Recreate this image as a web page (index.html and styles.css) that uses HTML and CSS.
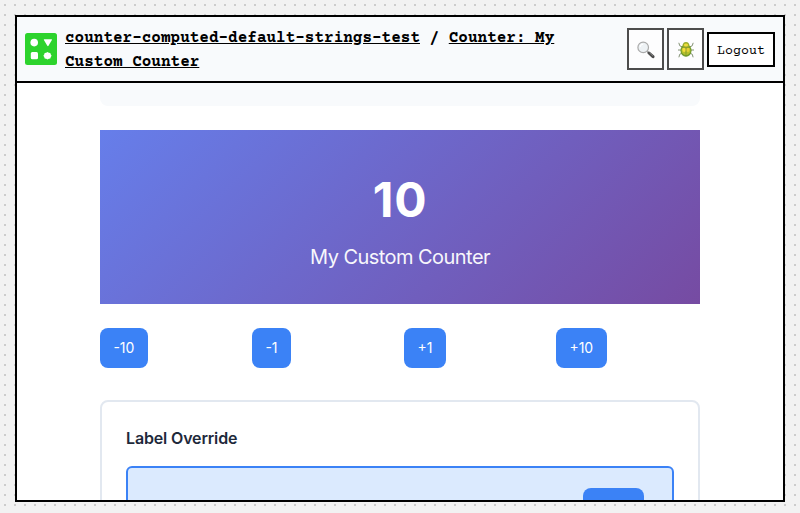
FILE: index.html
```html
<!DOCTYPE html>
<html lang="en">
<head>
<meta charset="utf-8">
<title>Counter: My Custom Counter</title>
<link rel="stylesheet" href="styles.css">
</head>
<body>
<div class="window">
  <header class="toolbar">
    <svg class="logo" viewBox="0 0 32 32" aria-hidden="true">
      <rect width="32" height="32" rx="2.5" fill="#2dd32d"/>
      <g fill="#fff">
        <circle cx="9.2" cy="9.6" r="3.8"/>
        <path d="M19.3 6.2h7.2q.8 0 .4.8l-3.4 5.7q-.6.9-1.2 0l-3.4-5.7q-.4-.8.4-.8z"/>
        <rect x="5.8" y="19" width="7.2" height="7.2" rx="1.5"/>
        <path d="M22.5 19l1.3.8 1.5.1.5 1.5.8 1.3-.8 1.3-.5 1.5-1.5.2-1.3.7-1.3-.7-1.5-.2-.5-1.5-.8-1.3.8-1.3.5-1.5 1.5-.1z"/>
      </g>
    </svg>
    <nav class="crumbs"><a href="#">counter-computed-default-strings-test</a> / <a href="#">Counter: My Custom Counter</a></nav>
    <div class="actions">
      <button class="icon-button" aria-label="Search">
        <svg width="18" height="18" viewBox="0 0 18 18">
          <path d="M10.2 10.2l2 2" stroke="#999" stroke-width="1.4"/>
          <path d="M12 12l4 3.7" stroke="#4c4c4c" stroke-width="3" stroke-linecap="round"/>
          <path d="M12.5 11.7l3.5 3.3" stroke="#858585" stroke-width=".8"/>
          <circle cx="6.2" cy="6.4" r="5.3" fill="#eef2f5" stroke="#aaa" stroke-width="1.2"/>
          <path d="M3.2 6a3.2 3.2 0 0 1 3-2.7" fill="none" stroke="#fff" stroke-width="1.1"/>
        </svg>
      </button>
      <button class="icon-button" aria-label="Debug">
        <svg width="18" height="18" viewBox="0 0 18 18">
          <path d="M6 6.3L2.8 4.8 1.8 1.8M12 6.3l3.2-1.5 1-3M5 9H1M13 9h4M5.3 12l-2.6 1.3-.8 3M12.7 12l2.6 1.3.8 3" fill="none" stroke="#849276"/>
          <ellipse cx="9" cy="9.6" rx="5.6" ry="6.1" fill="#719b2c"/>
          <ellipse cx="9" cy="9.4" rx="4.4" ry="4.9" fill="#b5c02b"/>
          <path d="M5.3 5.4Q5.8 1 9 1t3.7 4.4Q9 7 5.3 5.4z" fill="#99ae2c"/>
          <ellipse cx="9" cy="4" rx="2.1" ry="1.6" fill="#efdc3d"/>
          <ellipse cx="7.2" cy="8.7" rx="1.8" ry="2.3" fill="#f5dd3c"/>
          <ellipse cx="10.8" cy="8.7" rx="1.8" ry="2.3" fill="#e6d034"/>
          <path d="M4.7 6.1Q9 7.5 13.3 6.1M9 6.8v8.5" fill="none" stroke="#66842b" stroke-width=".6"/>
        </svg>
      </button>
      <button class="logout">Logout</button>
    </div>
  </header>
  <main class="content">
    <div class="previous-card"></div>
    <section class="hero">
      <div class="count">10</div>
      <div class="label">My Custom Counter</div>
    </section>
    <div class="steps">
      <div><button class="step">-10</button></div>
      <div><button class="step">-1</button></div>
      <div><button class="step">+1</button></div>
      <div><button class="step">+10</button></div>
    </div>
    <section class="panel">
      <h3>Label Override</h3>
      <div class="field"><div class="field-button"></div></div>
    </section>
  </main>
</div>
</body>
</html>
```
FILE: styles.css
```css
* { box-sizing: border-box; }
body {
  margin: 0;
  height: 513px;
  padding: 15px 15px 11px;
  overflow: hidden;
  background: #f2f2f2 url("data:image/svg+xml,%3Csvg xmlns='http://www.w3.org/2000/svg' width='10' height='10'%3E%3Crect x='4' y='4' width='2' height='2' fill='%23ccc'/%3E%3C/svg%3E");
  font-family: Inter, sans-serif;
}
.window {
  height: 487px;
  border: 2px solid #000;
  background: #fff;
  overflow: hidden;
}
.toolbar {
  display: flex;
  align-items: center;
  height: 66px;
  padding: 0 8px;
  border-bottom: 2px solid #000;
  background: #f8fafc;
}
.logo { flex: none; width: 32px; height: 32px; margin-right: 8px; }
.crumbs {
  flex: 1;
  padding: 2px 56px 0 0;
  font: bold 16px/24px "Courier Prime", "Courier New", "Liberation Mono", monospace;
  color: #000;
}
.crumbs a { color: inherit; text-decoration: underline; }
.actions { display: flex; align-items: center; gap: 3px; flex: none; }
button { margin: 0; }
.icon-button {
  display: flex;
  align-items: center;
  justify-content: center;
  width: 37px;
  height: 42px;
  padding: 1px 0 0;
  border: 2px solid #4c4c4c;
  background: #fdfdfe;
}
.logout {
  width: 68px;
  height: 35px;
  padding: 5px 0 0;
  border: 2px solid #000;
  background: #fff;
  color: #000;
  font: 13.333px "Courier Prime", "Courier New", "Liberation Mono", monospace;
}
.content { width: 600px; margin: 0 auto; }
.previous-card {
  height: 23px;
  margin-bottom: 24px;
  border-radius: 0 0 8px 8px;
  background: #f8fafc;
}
.hero {
  height: 174px;
  padding-top: 41px;
  background: linear-gradient(135deg, #667eea 0%, #764ba2 100%);
  color: #fff;
  text-align: center;
}
.count { font-size: 48px; font-weight: 700; line-height: 58px; letter-spacing: .8px; }
.label { margin-top: 16px; font-size: 20px; line-height: 24px; letter-spacing: -.55px; opacity: .95; }
.steps {
  display: grid;
  grid-template-columns: repeat(4, 1fr);
  gap: 8px;
  margin: 24px 0 32px;
}
.step {
  display: block;
  height: 40px;
  padding: 0 13.4px;
  border: 0;
  border-radius: 8px;
  background: #3b82f6;
  color: #fff;
  font: 14px/40px Inter, sans-serif;
}
.panel {
  height: 200px;
  padding: 24px;
  border: 2px solid #e2e8f0;
  border-radius: 8px;
}
h3 {
  margin: 0 0 16px;
  color: #1e293b;
  font-size: 16px;
  line-height: 24px;
  font-weight: 600;
  letter-spacing: -.15px;
}
.field {
  display: flex;
  justify-content: flex-end;
  height: 100px;
  padding: 20px 28px;
  border: 2px solid #3b82f6;
  border-radius: 6px;
  background: #dbeafe;
}
.field-button { width: 61px; height: 40px; border-radius: 8px; background: #3b82f6; }
```
